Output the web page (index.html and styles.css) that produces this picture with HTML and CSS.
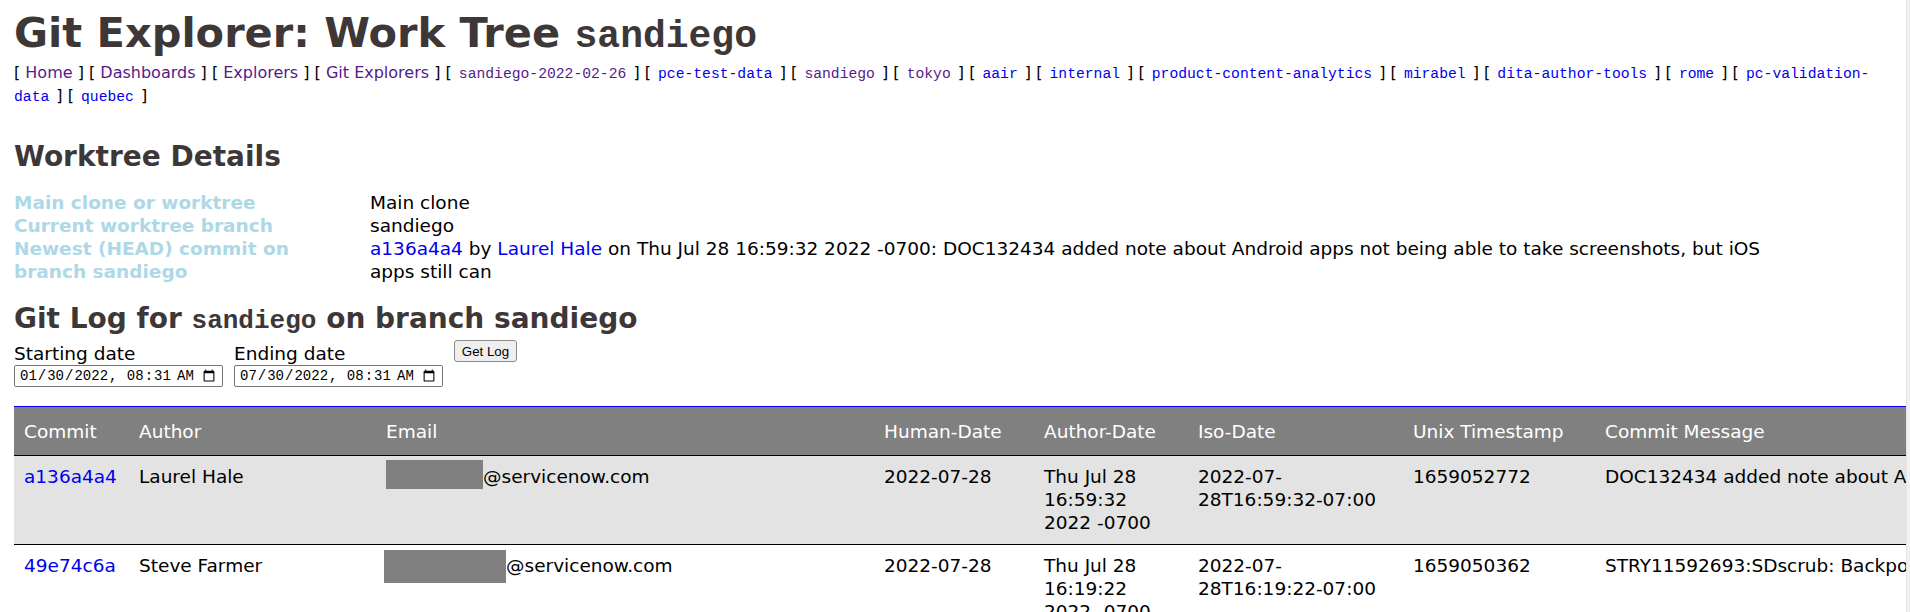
FILE: index.html
```html
<!DOCTYPE html>
<html lang="en">
<head>
<meta charset="utf-8">
<title>Git Explorer: Work Tree sandiego</title>
<link rel="stylesheet" href="styles.css">
</head>
<body>
<h1 class="title">Git Explorer: Work Tree <code class="mono">sandiego</code></h1>
<nav class="crumbs">[ <a class="visited" href="#">Home</a> ] [ <a class="visited" href="#">Dashboards</a> ] [ <a class="visited" href="#">Explorers</a> ] [ <a class="visited" href="#">Git Explorers</a> ] [ <a class="visited" href="#"><code>sandiego-2022-02-26</code></a> ] [ <a href="#"><code>pce-test-data</code></a> ] [ <a class="visited" href="#"><code>sandiego</code></a> ] [ <a class="visited" href="#"><code>tokyo</code></a> ] [ <a href="#"><code>aair</code></a> ] [ <a href="#"><code>internal</code></a> ] [ <a href="#"><code>product-content-analytics</code></a> ] [ <a href="#"><code>mirabel</code></a> ] [ <a href="#"><code>dita-author-tools</code></a> ] [ <a href="#"><code>rome</code></a> ] [ <a href="#"><code>pc-validation-data</code></a> ] [ <a href="#"><code>quebec</code></a> ]</nav>

<h2 class="section first">Worktree Details</h2>
<dl class="details">
  <dt>Main clone or worktree</dt>
  <dd>Main clone</dd>
  <dt>Current worktree branch</dt>
  <dd>sandiego</dd>
  <dt>Newest (HEAD) commit on branch sandiego</dt>
  <dd><a href="#">a136a4a4</a> by <a href="#">Laurel Hale</a> on Thu Jul 28 16:59:32 2022 -0700: DOC132434 added note about Android apps not being able to take screenshots, but iOS apps still can</dd>
</dl>

<h2 class="section">Git Log for <code class="mono">sandiego</code> on branch sandiego</h2>
<form class="log-form">
  <div class="field">
    <label for="start">Starting date</label>
    <input id="start" class="date-input" type="datetime-local" value="2022-01-30T08:31">
  </div>
  <div class="field">
    <label for="end">Ending date</label>
    <input id="end" class="date-input" type="datetime-local" value="2022-07-30T08:31">
  </div>
  <button type="button" class="get-log">Get Log</button>
</form>

<table class="log">
  <colgroup>
    <col class="c-commit"><col class="c-author"><col class="c-email"><col class="c-human"><col class="c-adate"><col class="c-iso"><col class="c-unix"><col class="c-msg">
  </colgroup>
  <thead>
    <tr><th>Commit</th><th>Author</th><th>Email</th><th>Human-Date</th><th>Author-Date</th><th>Iso-Date</th><th>Unix Timestamp</th><th>Commit Message</th></tr>
  </thead>
  <tbody>
    <tr class="shade">
      <td><a href="#">a136a4a4</a></td>
      <td>Laurel Hale</td>
      <td><span class="redact r1"></span>@servicenow.com</td>
      <td>2022-07-28</td>
      <td class="adate">Thu Jul 28 16:59:32 2022 -0700</td>
      <td>2022-07-28T16:59:32-07:00</td>
      <td>1659052772</td>
      <td>DOC132434 added note about Android apps not being able to take screenshots, but iOS apps still can</td>
    </tr>
    <tr>
      <td><a href="#">49e74c6a</a></td>
      <td>Steve Farmer</td>
      <td><span class="redact r2"></span>@servicenow.com</td>
      <td>2022-07-28</td>
      <td class="adate">Thu Jul 28 16:19:22 2022 -0700</td>
      <td>2022-07-28T16:19:22-07:00</td>
      <td>1659050362</td>
      <td>STRY11592693:SDscrub: Backport SD scrub fixes to sandiego</td>
    </tr>
  </tbody>
</table>
<div class="edge"></div>
</body>
</html>
```

FILE: styles.css
```css
html {
  overflow: hidden;
}

body {
  margin: 0;
  padding: 0 20px 0 14px;
  font-family: "DejaVu Sans", Verdana, sans-serif;
  font-size: 18.5px;
  line-height: 23px;
  color: #000;
  background: #fff;
}

a {
  color: #0000ee;
  text-decoration: none;
}

a.visited {
  color: #551a8b;
}

.title {
  margin: 8px 0 0;
  font-size: 41.5px;
  line-height: 49px;
  font-weight: bold;
  color: #3e3737;
}

.mono {
  font-family: "Liberation Mono", "Courier New", monospace;
}

.title .mono {
  font-size: 38px;
}

.crumbs {
  margin-top: 0;
  font-size: 16px;
  line-height: 23px;
}

.crumbs code {
  font-family: "Liberation Mono", "Courier New", monospace;
  font-size: 14.7px;
  line-height: 1;
  padding: 0 2px;
}

.section {
  margin: 20px 0 0;
  font-size: 28px;
  line-height: 32px;
  font-weight: bold;
  color: #3e3737;
}

.section.first {
  margin-top: 34px;
}

.section .mono {
  font-size: 26px;
}

.details {
  display: grid;
  grid-template-columns: 356px 1440px;
  margin: 18px 0 0;
}

.details dt {
  font-weight: bold;
  color: #add8e6;
  padding-right: 30px;
}

.details dd {
  margin: 0;
}

.log-form {
  display: flex;
  align-items: flex-start;
  gap: 11px;
  margin-top: 3px;
}

.field {
  display: flex;
  flex-direction: column;
  padding-top: 2px;
}

.date-input {
  box-sizing: border-box;
  width: 209px;
  height: 22px;
  padding: 0 4px;
  font-family: "Liberation Mono", "Courier New", monospace;
  font-size: 14px;
  border: 1px solid #767676;
  border-radius: 2px;
  background: #fff;
  color: #000;
}

.get-log {
  box-sizing: border-box;
  width: 63px;
  height: 22px;
  padding: 0 6px;
  font-family: "Liberation Sans", Arial, sans-serif;
  font-size: 13.3px;
  color: #000;
  background: #efefef;
  border: 1px solid #8a8a8a;
  border-radius: 3px;
}

.log {
  margin-top: 19px;
  border-collapse: collapse;
  table-layout: fixed;
  width: 3041px;
  border-top: 1px solid #0000ff;
}

.c-commit { width: 115px; }
.c-author { width: 247px; }
.c-email { width: 498px; }
.c-human { width: 160px; }
.c-adate { width: 154px; }
.c-iso { width: 215px; }
.c-unix { width: 192px; }
.c-msg { width: 1460px; }

.log th {
  padding: 13px 10px 12px;
  background: #808080;
  color: #fff;
  font-weight: normal;
  text-align: left;
  border-bottom: 1px solid #000;
}

.log td {
  padding: 9px 10px 10px;
  vertical-align: top;
}

.log td.adate {
  padding-right: 22px;
}

.log tr.shade td {
  background: #e3e3e3;
}

.log tbody tr + tr td {
  border-top: 1px solid #000;
}

.redact {
  display: inline-block;
  background: #808080;
  vertical-align: baseline;
}

.redact.r1 {
  width: 97px;
  height: 29px;
  margin: -10px 0 -6px;
}

.redact.r2 {
  width: 122px;
  height: 33px;
  margin: -12px 0 -11px -2px;
}

.edge {
  position: fixed;
  top: 0;
  right: 0;
  width: 3px;
  height: 100%;
  background: #f1f1f1;
  border-left: 1px solid #e4e4e4;
}
```
